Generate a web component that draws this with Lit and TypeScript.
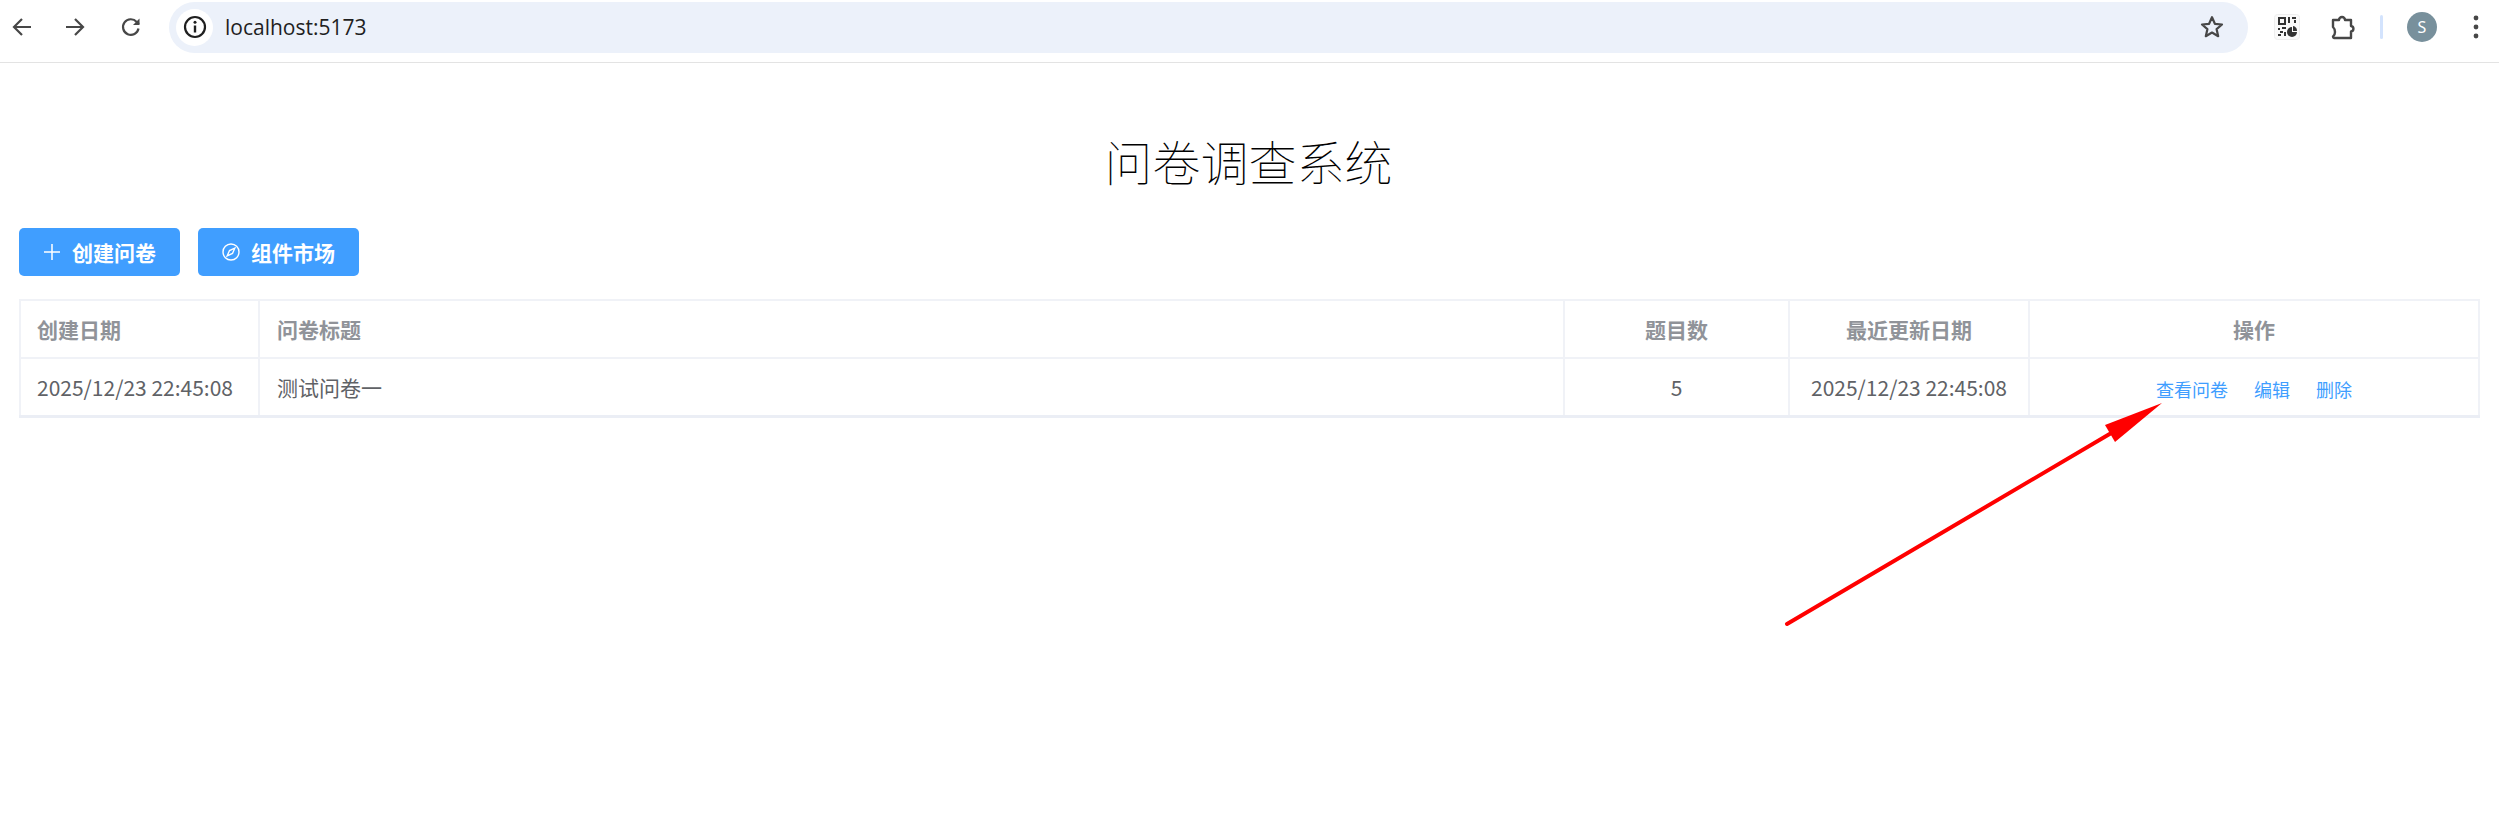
import { LitElement, html, css } from "lit";
import { customElement } from "lit/decorators.js";

@customElement("app-root")
export class AppRoot extends LitElement {
  static styles = css`
    :host { display: block; position: relative; width: 2499px; height: 819px; background: #fff; overflow: hidden; font-family: "Noto Sans CJK SC", "Noto Sans", sans-serif; }
    .chrome { height: 62px; border-bottom: 1px solid #e3e3e3; display: flex; align-items: center; box-sizing: content-box; position: relative; }
    .nav { width: 22px; height: 22px; flex: none; display: block; }
    .back { margin-left: 11px; }
    .fwd { margin-left: 31px; }
    .reload { margin-left: 34px; }
    .pill { margin-left: 27px; width: 2079px; height: 51px; margin-top: -8px; border-radius: 26px; background: #ecf1fa; display: flex; align-items: center; padding-left: 7px; box-sizing: border-box; }
    .info { width: 37px; height: 37px; border-radius: 50%; background: #fff; display: flex; align-items: center; justify-content: center; flex: none; }
    .url { margin-left: 12px; font: 21px "Open Sans", "Noto Sans", sans-serif; color: #1f1f1f; flex: 1; }
    .star { margin-right: 23px; display: block; }
    .qr { margin-left: 26px; display: block; }
    .ext { margin-left: 30px; display: block; }
    .sep { width: 3px; height: 24px; background: #d3e3fd; margin-left: 24px; border-radius: 2px; margin-top: -8px; }
    .avatar { width: 30px; height: 30px; border-radius: 50%; background: #78909c; color: #fff; font: 16px "Noto Sans", sans-serif; display: flex; align-items: center; justify-content: center; margin-left: 24px; margin-top: -8px; }
    .dots { margin-left: 36px; display: block; margin-top: -8px; }
    .up { margin-top: -8px; }
    main { padding: 0 21px 0 19px; }
    h1 { margin: 0; padding-top: 64px; text-align: center; font-size: 48px; line-height: 66px; font-weight: 100; color: #000; font-family: "Noto Sans CJK SC", sans-serif; }
    .actions { display: flex; gap: 18px; margin-top: 35px; }
    .btn { width: 161px; height: 48px; background: #409eff; border-radius: 5px; color: #fff; display: flex; align-items: center; justify-content: center; gap: 11px; font-size: 21px; font-weight: 700; }
    .btn svg { display: block; flex: none; }
    table { margin-top: 23px; width: 2459px; border-collapse: collapse; table-layout: fixed; font-size: 21px; border-bottom: 3px solid #ebeef5; }
    th, td { border: 2px solid #f0f2f7; padding: 0 16px; height: 58px; box-sizing: border-box; text-align: left; font-weight: 400; color: #606266; }
    th { color: #909399; font-weight: 700; }
    .title { padding-left: 17px; }
    .c { text-align: center; }
    .ops { font-size: 18px; color: #409eff; padding-top: 4px; }
    .ops span { margin: 0 13px; }
    .arrow { position: absolute; left: 0; top: 0; pointer-events: none; }
  `;

  render() {
    return html`
      <div class="chrome">
        <svg class="nav back up" viewBox="0 0 22 22" fill="none" stroke="#474747" stroke-width="2.2"><path d="M20 11H3M11 3l-8 8 8 8"/></svg>
        <svg class="nav fwd up" viewBox="0 0 22 22" fill="none" stroke="#474747" stroke-width="2.2"><path d="M2 11h17M11 3l8 8-8 8"/></svg>
        <svg class="nav reload up" viewBox="0 0 22 22" fill="none" stroke="#474747" stroke-width="2.2"><path d="M18.5 12.5a7.8 7.8 0 1 1-1.8-6.6L19 8"/><path d="M19.5 2.5V9h-6.5" fill="#474747" stroke="none"/></svg>
        <div class="pill">
          <div class="info">
            <svg width="26" height="26" viewBox="0 0 26 26" fill="none"><circle cx="13" cy="13" r="10" stroke="#1f1f1f" stroke-width="2.2"/><path d="M13 11.5v7" stroke="#1f1f1f" stroke-width="2.4"/><circle cx="13" cy="8.2" r="1.5" fill="#1f1f1f"/></svg>
          </div>
          <div class="url">localhost:5173</div>
          <svg class="star" width="26" height="26" viewBox="0 0 26 26" fill="none" stroke="#474747" stroke-width="2.2" stroke-linejoin="round"><path d="M13 3.2l2.9 6.6 7.1.7-5.4 4.700 1.600 7-6.200-3.700-6.200 3.700 1.600-7L3 10.500l7.100-.7z"/></svg>
        </div>
        <svg class="qr up" width="26" height="26" viewBox="0 0 26 26"><rect x=".5" y=".5" width="25" height="25" rx="3" fill="#fafafa" stroke="#eee"/><path fill="#333" fill-rule="evenodd" d="M4 3h8v8H4zm2 2v4h4V5zM14 3h2v6h-2zM18 3h4v2h-4zM20 6h2v3h-2zM4 14h2v2H4zM8 13h4v2H8zM6 17h3v2H6zM4 20h3v2H4zM10 18h2v4h-2z"/><circle cx="18" cy="18" r="5" fill="#333"/><path d="M18 12h5v6h-5z" fill="#fafafa"/><path d="M19 12a5 5 0 0 1 4 5h-4z" fill="#333"/></svg>
        <svg class="ext up" width="26" height="26" viewBox="0 0 26 26" fill="none" stroke="#474747" stroke-width="2.4" stroke-linejoin="round"><path d="M3 6h6a3 3 0 0 1 6 0h6v6a3 2.800 0 0 1 0 5.500V24H4a2 2 0 0 1-1-1.500c1.500-1 2-2.500 2-4.500S4 14 3 13z"/></svg>
        <div class="sep"></div>
        <div class="avatar">S</div>
        <svg class="dots" width="6" height="24" viewBox="0 0 6 24" fill="#474747"><circle cx="3" cy="3" r="2.400"/><circle cx="3" cy="12" r="2.400"/><circle cx="3" cy="21" r="2.400"/></svg>
      </div>
      <main>
        <h1>问卷调查系统</h1>
        <div class="actions">
          <div class="btn">
            <svg width="18" height="18" viewBox="0 0 18 18" stroke="#fff" stroke-width="1.5"><path d="M9 1v16M1 9h16"/></svg>
            创建问卷
          </div>
          <div class="btn">
            <svg width="18" height="18" viewBox="0 0 18 18" fill="none" stroke="#fff" stroke-width="1.400"><circle cx="9" cy="9" r="8"/><path d="M12.800 5.200L7.500 7.500 5.200 12.800 10.500 10.500z"/></svg>
            组件市场
          </div>
        </div>
        <table>
          <colgroup><col style="width:239px" /><col style="width:1305px" /><col style="width:225px" /><col style="width:240px" /><col style="width:450px" /></colgroup>
          <tr><th>创建日期</th><th class="title">问卷标题</th><th class="c">题目数</th><th class="c">最近更新日期</th><th class="c">操作</th></tr>
          <tr><td>2025/12/23 22:45:08</td><td class="title">测试问卷一</td><td class="c">5</td><td class="c">2025/12/23 22:45:08</td><td class="c ops"><span>查看问卷</span><span>编辑</span><span>删除</span></td></tr>
        </table>
      </main>
      <svg class="arrow" width="2499" height="819"><path d="M1787 624L2113 432" stroke="#ff0000" stroke-width="4" stroke-linecap="round"/><path d="M2162 403L2105 425L2115 442z" fill="#ff0000"/></svg>
    `;
  }
}
